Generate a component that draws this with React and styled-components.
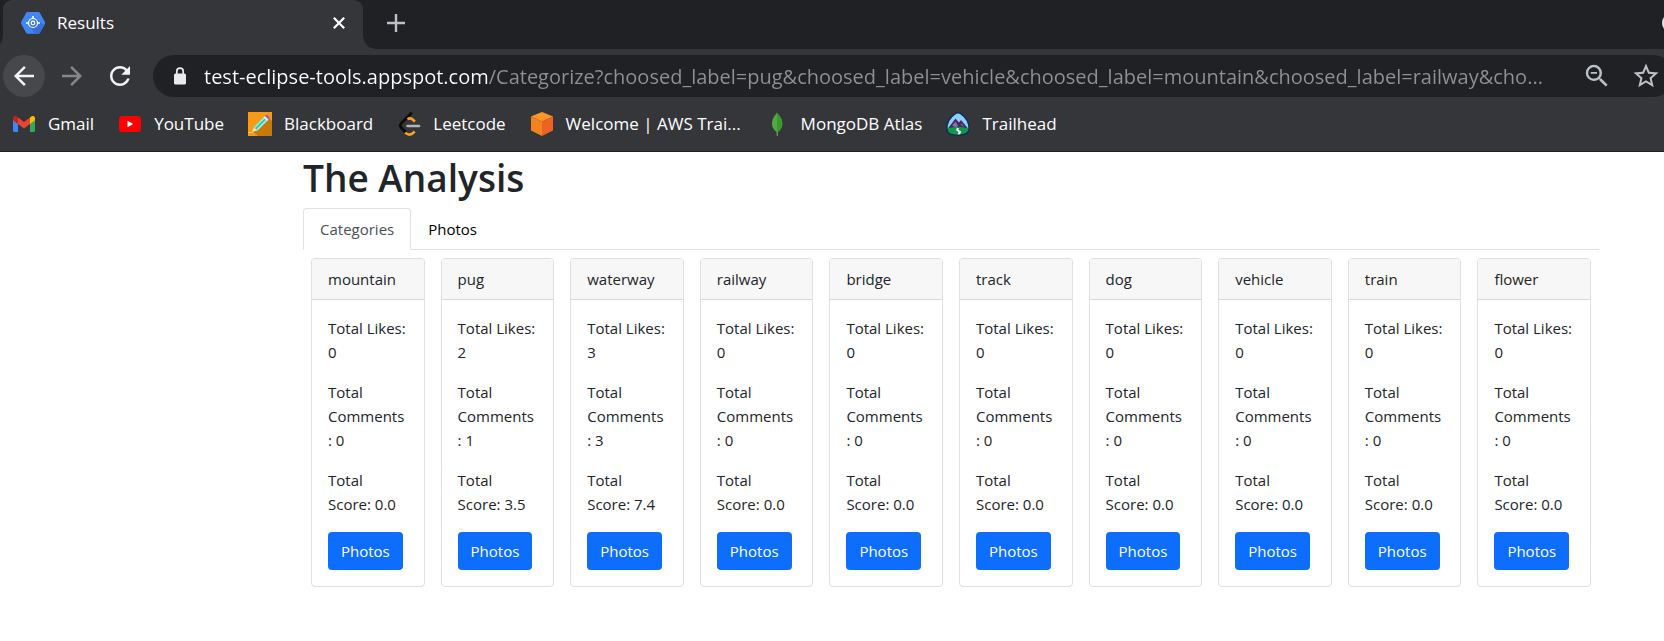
import React, { useState } from "react";
import styled, { createGlobalStyle, css } from "styled-components";

const GlobalStyle = createGlobalStyle`
  *, *::before, *::after { box-sizing: border-box; }
  body {
    margin: 0;
    background: #fff;
    color: #212529;
    font-family: "Open Sans", "Noto Sans", sans-serif;
    font-size: 15px;
    line-height: 24px;
  }
  button, input { font: inherit; color: inherit; margin: 0; padding: 0; border: 0; background: none; }
  button { cursor: pointer; }
  svg { display: block; flex: none; }
`;

const BrowserChrome = styled.header`
  background: #35363a;
  border-bottom: 1px solid #202124;
  overflow: hidden;
  color: #fff;
`;

const TabStrip = styled.div`
  display: flex;
  align-items: stretch;
  height: 49px;
  padding-left: 3px;
  background: #202124;
`;

const BrowserTab = styled.div`
  position: relative;
  display: flex;
  align-items: center;
  gap: 12px;
  width: 360px;
  padding: 0 12px 4px 18px;
  border-radius: 9px 9px 0 0;
  background: #35363a;
  font-size: 17px;

  &::before,
  &::after {
    content: "";
    position: absolute;
    bottom: 0;
    width: 12px;
    height: 12px;
  }
  &::before {
    right: 100%;
    background: radial-gradient(circle at 0 0, #202124 11px, #35363a 12px);
  }
  &::after {
    left: 100%;
    background: radial-gradient(circle at 100% 0, #202124 11px, #35363a 12px);
  }
`;

const TabTitle = styled.span`
  flex: 1;
`;

const StripButton = styled.button`
  display: grid;
  place-items: center;
  width: 24px;
  height: 24px;
  color: ${(p) => p.$color};
`;

const NewTab = styled(StripButton)`
  align-self: center;
  margin: 0 auto 4px 21px;
`;

const StripMenu = styled(StripButton)`
  align-self: center;
  margin: 0 -20px 4px 0;
`;

const Toolbar = styled.div`
  display: flex;
  align-items: center;
  gap: 6px;
  padding: 6px 0 0 3px;
`;

const NavButton = styled.button`
  display: grid;
  place-items: center;
  flex: none;
  width: 42px;
  height: 42px;
  border-radius: 50%;
  color: ${(p) => (p.$dim ? "#86878a" : "#f1f3f4")};
  background: ${(p) => (p.$active ? "#47484c" : "transparent")};
`;

const AddressBar = styled.div`
  display: flex;
  align-items: center;
  flex: 1;
  height: 42px;
  margin: 0 -10px 0 6px;
  padding: 0 13px 0 15px;
  border-radius: 21px;
  background: #202124;
`;

const AddressInput = styled.input`
  flex: 1;
  min-width: 0;
  height: 42px;
  margin: 0 12px;
  color: #8f9194;
  font-size: 20px;
  outline: none;
  text-overflow: ellipsis;
  background: linear-gradient(90deg, #fff 285px, #8f9194 285px);
  background-clip: text;
  -webkit-text-fill-color: transparent;
`;

const AddressActions = styled.div`
  display: flex;
  gap: 19px;
`;

const AddressAction = styled.button`
  color: #bdc1c6;
`;

const BookmarkBar = styled.nav`
  display: flex;
  align-items: center;
  gap: 24px;
  height: 54px;
  padding-left: 12px;
`;

const Bookmark = styled.a`
  display: flex;
  align-items: center;
  gap: 12px;
  flex: none;
  color: #fff;
  font-size: 17px;
  text-decoration: none;
`;

const Page = styled.main`
  padding: 0 65px 0 303px;
`;

const Heading = styled.h1`
  margin: 0 0 4px;
  font-size: 37px;
  font-weight: 600;
  line-height: 52px;
`;

const Tabs = styled.div`
  display: flex;
  box-shadow: inset 0 -1px #dee2e6;
`;

const TabButton = styled.button`
  height: 42px;
  padding: 0 16px;
  border: 1px solid transparent;
  border-radius: 4px 4px 0 0;
  color: #000;
  ${(p) =>
    p.$active &&
    css`
      color: #495057;
      background: #fff;
      border-color: #dee2e6 #dee2e6 #fff;
    `}
`;

const CardGrid = styled.div`
  display: grid;
  grid-template-columns: repeat(10, 1fr);
  gap: 16px;
  padding: 8px;
`;

const Card = styled.article`
  min-width: 0;
  border: 1px solid #dfdfdf;
  border-radius: 4px;
  overflow: hidden;
`;

const CardHeader = styled.div`
  padding: 8px 16px;
  border-bottom: 1px solid #d8d8d8;
  background: #f7f7f7;
`;

const CardBody = styled.div`
  padding: 16px;
`;

const Stat = styled.p`
  margin: 0 0 16px;
  white-space: nowrap;
`;

const PrimaryButton = styled.button`
  height: 38px;
  padding: 0 13px;
  border-radius: 4px;
  color: #fff;
  background: #0d6efd;
`;

const GlyphPaths = {
  back: "M20 11H7.83l5.59-5.59L12 4l-8 8 8 8 1.41-1.41L7.83 13H20v-2z",
  forward: "M12 4l-1.41 1.41L16.17 11H4v2h12.17l-5.58 5.59L12 20l8-8z",
  reload:
    "M17.65 6.35C16.2 4.9 14.21 4 12 4c-4.42 0-7.99 3.58-7.99 8s3.57 8 7.99 8c3.73 0 6.84-2.55 7.73-6h-2.08c-.82 2.33-3.04 4-5.65 4-3.31 0-6-2.69-6-6s2.69-6 6-6c1.66 0 3.14.69 4.22 1.78L13 11h7V4l-2.35 2.35z",
  zoomOut:
    "M15.5 14h-.79l-.28-.27A6.471 6.471 0 0 0 16 9.500 6.500 6.500 0 1 0 9.500 16c1.610 0 3.090-.59 4.230-1.570l.27.28v.79l5 4.990L20.490 19l-4.990-5zm-6 0C7.010 14 5 11.990 5 9.500S7.010 5 9.500 5 14 7.010 14 9.500 11.990 14 9.500 14zM7 8.800h5v1.400H7z",
  star:
    "M22 9.240l-7.190-.62L12 2 9.190 8.630 2 9.240l5.460 4.730L5.820 21 12 17.270 18.180 21l-1.630-7.030L22 9.240zM12 15.400l-3.760 2.270 1-4.280-3.320-2.880 4.380-.38L12 6.100l1.710 4.040 4.380.38-3.320 2.880 1 4.280L12 15.400z",
};

function Glyph({ name, size = 30 }) {
  return (
    <svg width={size} height={size} viewBox="0 0 24 24" fill="currentColor" aria-hidden="true">
      <path d={GlyphPaths[name]} />
    </svg>
  );
}

function CloudIcon() {
  return (
    <svg width="24" height="24" viewBox="0 0 24 24" aria-hidden="true">
      <path d="M6.500 1h11a1.500 1.500 0 0 1 1.300.8l5 9a2.200 2.200 0 0 1 0 2.200l-5 9a1.500 1.500 0 0 1-1.300.8h-11a1.500 1.500 0 0 1-1.300-.8l-5-9a2.200 2.200 0 0 1 0-2.200l5-9A1.500 1.500 0 0 1 6.500 1z" fill="#4285f4" />
      <path d="M15.500 8.500L23.500 14l-4.700 8a1.500 1.500 0 0 1-1.300.8h-3L8.500 15.500z" fill="#3871d6" />
      <g fill="none" stroke="#fff">
        <circle cx="12" cy="12" r="4.500" strokeWidth="1.200" />
        <circle cx="12" cy="12" r="1.800" strokeWidth="1.200" />
        <path d="M12 5v2.500M5 12h2.500M16.500 12H19" strokeWidth="1.600" />
      </g>
    </svg>
  );
}

function LockIcon() {
  return (
    <svg width="24" height="24" viewBox="0 0 24 24" aria-hidden="true">
      <rect x="6" y="9.500" width="12" height="11" rx="1.500" fill="#e8eaed" />
      <path d="M8.800 10V7.300a3.200 3.200 0 0 1 6.400 0V10" fill="none" stroke="#e8eaed" strokeWidth="1.700" />
    </svg>
  );
}

function GmailIcon() {
  return (
    <svg width="24" height="24" viewBox="0 0 24 24" aria-hidden="true">
      <path d="M1 7.500l5 3.800V20H2.500A1.500 1.500 0 0 1 1 18.500z" fill="#4285f4" />
      <path d="M18 11.300l5-3.800v11a1.500 1.500 0 0 1-1.500 1.500H18z" fill="#34a853" />
      <path d="M18 5.500l1.400-1.100C20.900 3.300 23 4.300 23 6.200v2L18 12z" fill="#fbbc04" />
      <path d="M6 5.500l6 4.500 6-4.500V12l-6 4.500L6 12z" fill="#ea4335" />
      <path d="M1 8.200v-2c0-1.900 2.100-2.900 3.600-1.800L6 5.500V12z" fill="#c5221f" />
    </svg>
  );
}

function YouTubeIcon() {
  return (
    <svg width="24" height="24" viewBox="0 0 24 24" aria-hidden="true">
      <rect x="1" y="4" width="22" height="16" rx="3.500" fill="#f00" />
      <path d="M9.500 8.800v6.400l5.800-3.200z" fill="#fff" />
    </svg>
  );
}

function PencilIcon() {
  return (
    <svg width="24" height="24" viewBox="0 0 24 24" aria-hidden="true">
      <path d="M0 0h24v24H0z" fill="#f79a16" />
      <path d="M21 6l3 3v15H10l-5-4.500z" fill="#c97a06" />
      <path d="M0 20h4.500v1H0z" fill="#fbd08c" />
      <path d="M4 20l2-5 3.500 3.500z" fill="#fbe0b0" />
      <path d="M6 15L16.500 4.500 20 8 9.500 18.500z" fill="#35c9a5" />
      <path d="M6 15L16.500 4.500l1.100 1.100L7.100 16.100z" fill="#9af0dc" />
      <path d="M8.400 17.400L18.900 6.900 20 8 9.500 18.500z" fill="#b5e7f7" />
      <path d="M15.500 5.500L17 4l3.500 3.500L19 9z" fill="#e9eef5" />
      <path d="M17 4l1-1a1 1 0 0 1 1.400 0l2.100 2.100a1 1 0 0 1 0 1.400l-1 1z" fill="#a65bc4" />
    </svg>
  );
}

function LeetcodeIcon() {
  return (
    <svg width="24" height="24" viewBox="0 0 24 24" fill="none" strokeLinecap="round" aria-hidden="true">
      <path d="M14 1.500L4.200 11.300a3 3 0 0 0 0 4.200l4.300 4.700" stroke="#0a0a0a" strokeWidth="2.600" />
      <path d="M8.200 20.500c2.300 2.600 5.900 2.900 8.300.2l1.200-1.200" stroke="#ffa116" strokeWidth="2.600" strokeLinecap="butt" />
      <path d="M10.500 7.200c2.200-1.500 4-1 5.700.8l1.700 1.700" stroke="#ffa116" strokeWidth="2.600" strokeLinecap="butt" />
      <path d="M10.500 14h11.500" stroke="#b3b3b3" strokeWidth="2.600" />
    </svg>
  );
}

function CubeIcon() {
  return (
    <svg width="24" height="24" viewBox="0 0 24 24" aria-hidden="true">
      <path d="M12 0l11 4.500L12 9.500 1 4.500z" fill="#fd9827" />
      <path d="M1 4.500l11 5V24L1 18.500z" fill="#f58220" />
      <path d="M23 4.500l-11 5V24l11-5.500z" fill="#ee6322" />
    </svg>
  );
}

function LeafIcon() {
  return (
    <svg width="24" height="24" viewBox="0 0 24 24" aria-hidden="true">
      <path d="M11.600 19h.9l.2 5h-.9z" fill="#a8a8a0" />
      <path d="M12 .5c.8 2.200 5.300 4.700 5.300 11 0 4.500-2.500 7-5 9-2.600-2-5.300-4.500-5.300-9 0-6 4.300-8.800 5-11z" fill="#4faa41" />
      <path d="M12 .5c.8 2.200 5.300 4.700 5.300 11 0 4.500-2.500 7-5 9z" fill="#3f9634" />
    </svg>
  );
}

function TrailheadIcon() {
  return (
    <svg width="24" height="24" viewBox="0 0 24 24" aria-hidden="true">
      <path d="M12 .8c1 0 2 .3 3 1 4.500 3 8.200 8.500 8.200 15.200 0 4-3 6.200-11.200 6.200S.8 21 .8 17C.8 10.300 4.500 4.800 9 1.800c1-.7 2-1 3-1z" fill="#8ed1f5" />
      <path d="M1.500 17L9.500 6.500l3.500 4 2-2.500 7.500 9z" fill="#3c2a63" />
      <path d="M6 13.500l3.500-4 2.500 4-1.500 2.500z" fill="#9b63b5" />
      <path d="M14 13l2-2 2.500 4z" fill="#7b4b9a" />
      <path d="M1 16.500c7-2 15-2 22 0 .3 4.500-3 6.500-11 6.500S.8 21 1 16.500z" fill="#169647" />
      <path d="M11 16h2l-.8 1.500 2.800 2-1 3.500h-2.500l1-3-2.500-2z" fill="#fff" />
      <path d="M12 .8c1 0 2 .3 3 1 4.500 3 8.200 8.500 8.200 15.200 0 4-3 6.200-11.200 6.200S.8 21 .8 17C.8 10.300 4.500 4.800 9 1.800c1-.7 2-1 3-1z" fill="none" stroke="#0f2d5c" strokeWidth="1.600" />
    </svg>
  );
}

const bookmarks = [
  { label: "Gmail", icon: GmailIcon },
  { label: "YouTube", icon: YouTubeIcon },
  { label: "Blackboard", icon: PencilIcon },
  { label: "Leetcode", icon: LeetcodeIcon },
  { label: "Welcome | AWS Trai...", icon: CubeIcon },
  { label: "MongoDB Atlas", icon: LeafIcon },
  { label: "Trailhead", icon: TrailheadIcon },
];

const categories = [
  { name: "mountain", likes: 0, comments: 0, score: "0.0" },
  { name: "pug", likes: 2, comments: 1, score: "3.5" },
  { name: "waterway", likes: 3, comments: 3, score: "7.4" },
  { name: "railway", likes: 0, comments: 0, score: "0.0" },
  { name: "bridge", likes: 0, comments: 0, score: "0.0" },
  { name: "track", likes: 0, comments: 0, score: "0.0" },
  { name: "dog", likes: 0, comments: 0, score: "0.0" },
  { name: "vehicle", likes: 0, comments: 0, score: "0.0" },
  { name: "train", likes: 0, comments: 0, score: "0.0" },
  { name: "flower", likes: 0, comments: 0, score: "0.0" },
];

const address =
  "test-eclipse-tools.appspot.com/Categorize?choosed_label=pug&choosed_label=vehicle&choosed_label=mountain&choosed_label=railway&cho...";

function CategoryCard({ name, likes, comments, score }) {
  return (
    <Card>
      <CardHeader>{name}</CardHeader>
      <CardBody>
        <Stat>Total Likes:<br />{likes}</Stat>
        <Stat>Total<br />Comments<br />: {comments}</Stat>
        <Stat>Total<br />Score: {score}</Stat>
        <PrimaryButton type="button">Photos</PrimaryButton>
      </CardBody>
    </Card>
  );
}

export default function App() {
  const [tab, setTab] = useState("Categories");
  return (
    <>
      <GlobalStyle />
      <BrowserChrome>
        <TabStrip>
          <BrowserTab>
            <CloudIcon />
            <TabTitle>Results</TabTitle>
            <StripButton type="button" aria-label="Close tab" $color="#fff">
              <svg width="12" height="12" viewBox="0 0 12 12" stroke="currentColor" strokeWidth="2.200">
                <path d="M.8.8l10.400 10.400M11.200.8L.8 11.200" />
              </svg>
            </StripButton>
          </BrowserTab>
          <NewTab type="button" aria-label="New tab" $color="#bdc1c6">
            <svg width="18" height="18" viewBox="0 0 18 18" stroke="currentColor" strokeWidth="2.400">
              <path d="M9 0v18M0 9h18" />
            </svg>
          </NewTab>
          <StripMenu type="button" aria-label="Search tabs" $color="#dfe1e5">
            <svg width="20" height="20" viewBox="0 0 20 20" fill="currentColor">
              <circle cx="10" cy="10" r="10" />
            </svg>
          </StripMenu>
        </TabStrip>
        <Toolbar>
          <NavButton type="button" aria-label="Back" $active><Glyph name="back" /></NavButton>
          <NavButton type="button" aria-label="Forward" $dim><Glyph name="forward" /></NavButton>
          <NavButton type="button" aria-label="Reload"><Glyph name="reload" /></NavButton>
          <AddressBar>
            <LockIcon />
            <AddressInput type="text" aria-label="Address" defaultValue={address} spellCheck={false} />
            <AddressActions>
              <AddressAction type="button" aria-label="Zoom"><Glyph name="zoomOut" /></AddressAction>
              <AddressAction type="button" aria-label="Bookmark this page"><Glyph name="star" /></AddressAction>
            </AddressActions>
          </AddressBar>
        </Toolbar>
        <BookmarkBar aria-label="Bookmarks">
          {bookmarks.map(({ label, icon: Icon }) => (
            <Bookmark key={label} href="#"><Icon />{label}</Bookmark>
          ))}
        </BookmarkBar>
      </BrowserChrome>
      <Page>
        <Heading>The Analysis</Heading>
        <Tabs role="tablist">
          {["Categories", "Photos"].map((name) => (
            <TabButton key={name} type="button" role="tab" aria-selected={tab === name} $active={tab === name} onClick={() => setTab(name)}>
              {name}
            </TabButton>
          ))}
        </Tabs>
        <CardGrid>
          {categories.map((category) => (
            <CategoryCard key={category.name} {...category} />
          ))}
        </CardGrid>
      </Page>
    </>
  );
}
